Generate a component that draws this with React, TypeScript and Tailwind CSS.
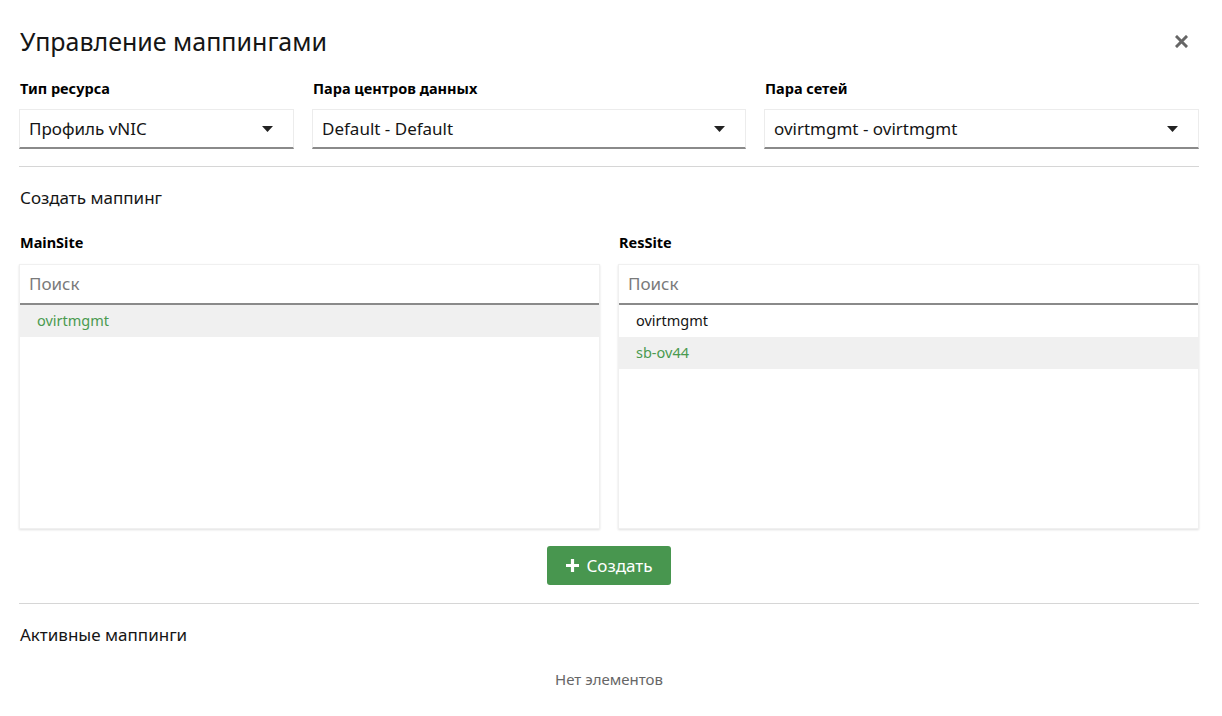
import React from 'react'

const font = { fontFamily: '"Noto Sans", "Open Sans", sans-serif' }

const Caret: React.FC = () => (
  <svg width="11" height="6" viewBox="0 0 11 6" className="shrink-0">
    <path d="M0 0h11L5.5 6z" fill="#222" />
  </svg>
)

const Select: React.FC<{ value: string; width: string }> = ({ value, width }) => (
  <div
    className={`flex h-[40px] items-center justify-between border border-b-2 border-[#ececec] border-b-[#8a8a8a] pr-5 pl-[9px] ${width}`}
  >
    <span className="text-[17px] text-[#151515]">{value}</span>
    <Caret />
  </div>
)

const Field: React.FC<{ label: string; value: string; width: string }> = ({ label, value, width }) => (
  <div className="flex flex-col gap-[11px]">
    <span className="pl-px text-[14.5px] leading-[20px] font-bold text-black">{label}</span>
    <Select value={value} width={width} />
  </div>
)

type Item = { name: string; selected?: boolean }

const ListBox: React.FC<{ title: string; items: Item[] }> = ({ title, items }) => (
  <div className="flex flex-1 flex-col gap-[12px]">
    <span className="pl-px text-[14.5px] leading-[20px] font-bold text-black">{title}</span>
    <div className="flex h-[265px] flex-col border border-[#f0f0f0] shadow-[0_1px_2px_rgba(0,0,0,0.12)]">
      <div className="flex h-[40px] shrink-0 items-center border-b-2 border-[#8a8a8a] pl-[9px] text-[17px] text-[#7a7a7a]">
        Поиск
      </div>
      {items.map((it) => (
        <div
          key={it.name}
          className={`flex h-[32px] items-center pl-[17px] text-[14.5px] ${
            it.selected ? 'bg-[#f0f0f0] text-[#4a9a4f]' : 'text-[#151515]'
          }`}
        >
          {it.name}
        </div>
      ))}
    </div>
  </div>
)

const App: React.FC = () => {
  return (
    <div className="h-[716px] w-[1222px] bg-white pr-[23px] pl-[19px] text-[#151515]" style={font}>
      <header className="flex items-center justify-between pt-[24px] pb-[20px]">
        <h1 className="pl-px text-[25px] leading-[34px] font-normal text-[#151515]">Управление маппингами</h1>
        <svg width="13" height="13" viewBox="0 0 13 13" className="mr-[11px]">
          <path d="M2 2l9 9M11 2l-9 9" stroke="#666" strokeWidth="3" strokeLinecap="square" />
        </svg>
      </header>

      <section className="flex gap-[18px] pb-[17px]">
        <Field label="Тип ресурса" value="Профиль vNIC" width="w-[275px]" />
        <Field label="Пара центров данных" value="Default - Default" width="w-[434px]" />
        <Field label="Пара сетей" value="ovirtmgmt - ovirtmgmt" width="w-[435px]" />
      </section>

      <div className="border-t border-[#d6d6d6]" />

      <h2 className="pt-[19px] pb-[22px] pl-px text-[17px] leading-[24px] font-normal">Создать маппинг</h2>

      <section className="flex gap-[18px]">
        <ListBox title="MainSite" items={[{ name: 'ovirtmgmt', selected: true }]} />
        <ListBox title="ResSite" items={[{ name: 'ovirtmgmt' }, { name: 'sb-ov44', selected: true }]} />
      </section>

      <div className="flex justify-center pt-[17px] pb-[18px]">
        <button className="flex h-[39px] w-[124px] items-center justify-center gap-[6px] rounded-[3px] bg-[#48964f] text-[17px] text-white">
          <svg width="15" height="15" viewBox="0 0 15 15">
            <path d="M7.5 1v13M1 7.5h13" stroke="#fff" strokeWidth="3.2" />
          </svg>
          Создать
        </button>
      </div>

      <div className="border-t border-[#d6d6d6]" />

      <h2 className="pt-[19px] pl-px text-[17px] leading-[24px] font-normal">Активные маппинги</h2>

      <p className="pt-[21px] text-center text-[15px] text-[#666]">Нет элементов</p>
    </div>
  )
}

export default App
